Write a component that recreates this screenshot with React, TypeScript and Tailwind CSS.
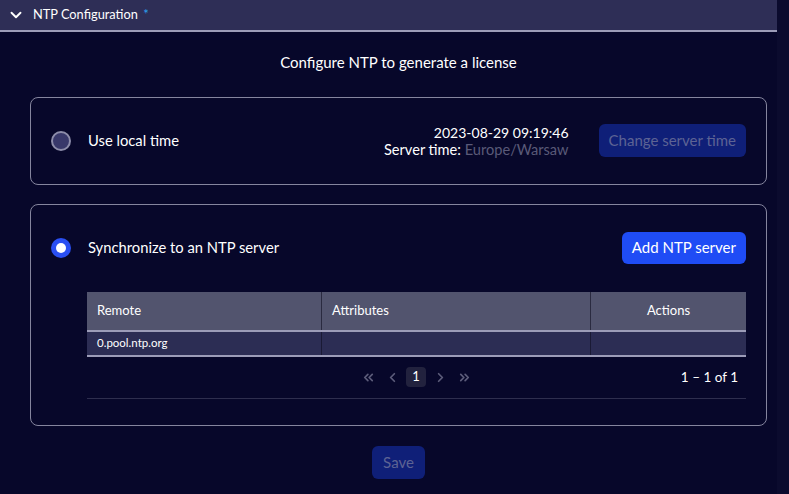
import { ChevronDown, ChevronLeft, ChevronRight, ChevronsLeft, ChevronsRight } from "lucide-react";

function Radio({ checked }: { checked?: boolean }) {
  if (checked) {
    return (
      <span className="flex h-5 w-5 items-center justify-center rounded-full bg-[#2a4ff2]">
        <span className="h-[10px] w-[10px] rounded-full bg-white" />
      </span>
    );
  }
  return <span className="h-5 w-5 rounded-full border-2 border-[#8d8daa] bg-[#38386a]" />;
}

export default function App() {
  return (
    <div className="flex h-[494px] w-[789px] bg-[#07072a] font-['Lato',sans-serif] text-white">
      <div className="flex w-[777px] flex-col">
        <div className="flex h-[32px] items-center gap-[8px] border-b-2 border-[#9c9cb8] bg-[#2e2e56] pl-[7px]">
          <ChevronDown size={18} strokeWidth={2.5} className="text-white" />
          <span className="text-[12.8px]">
            NTP Configuration <span className="ml-[2px] text-[#2ba5f0]">*</span>
          </span>
        </div>

        <div className="ml-[30px] mr-[10px] flex flex-col">
          <h1 className="mt-[19px] text-center text-[15px]">Configure NTP to generate a license</h1>

          <div className="mt-[23px] flex h-[88px] items-center rounded-lg border border-[#85859e] px-[20px]">
            <Radio />
            <span className="ml-[17px] text-[14.75px]">Use local time</span>
            <div className="ml-auto flex flex-col items-end leading-[17px]">
              <span className="text-[14px]">2023-08-29 09:19:46</span>
              <span className="text-[14.6px]">
                Server time: <span className="text-[#5a5a78]">Europe/Warsaw</span>
              </span>
            </div>
            <button className="ml-[30px] h-[33px] rounded-md bg-[#0f1f78] px-[10px] text-[15px] text-[#5d6394]">
              Change server time
            </button>
          </div>

          <div className="mt-[19px] flex flex-col rounded-lg border border-[#85859e] px-[20px] pb-[26px] pt-[27px]">
            <div className="flex items-center">
              <Radio checked />
              <span className="ml-[17px] text-[14.75px]">Synchronize to an NTP server</span>
              <button className="ml-auto h-[32px] rounded-md bg-[#1f4cf5] px-[10px] text-[15px]">Add NTP server</button>
            </div>

            <div className="ml-[36px] mt-[28px]">
              <div className="grid grid-cols-[235px_269px_1fr] border-b-2 border-[#9c9cb8] bg-[#52546e] text-[13px]">
                <div className="flex h-[38px] items-center border-r border-[#2a2a40] pl-[10px]">Remote</div>
                <div className="flex h-[38px] items-center border-r border-[#2a2a40] pl-[10px]">Attributes</div>
                <div className="flex h-[38px] items-center justify-center">Actions</div>
              </div>
              <div className="grid grid-cols-[235px_269px_1fr] border-b-2 border-[#9c9cb8] bg-[#2c2d54] text-[11.5px]">
                <div className="flex h-[23px] items-center border-r border-[#1a1a35] pl-[10px]">0.pool.ntp.org</div>
                <div className="border-r border-[#1a1a35]" />
                <div />
              </div>
              <div className="flex h-[42px] items-center border-b border-[#2e2e4e]">
                <div className="ml-[274px] flex items-center text-[#5c5c7a]">
                  <ChevronsLeft size={15} strokeWidth={2.75} />
                  <ChevronLeft size={15} strokeWidth={2.75} className="ml-[9px]" />
                  <span className="ml-[6px] flex h-[20px] w-[20px] items-center justify-center rounded bg-[#22223e] text-[13px] text-white">
                    1
                  </span>
                  <ChevronRight size={15} strokeWidth={2.75} className="ml-[7px]" />
                  <ChevronsRight size={15} strokeWidth={2.75} className="ml-[9px]" />
                </div>
                <span className="ml-auto mr-[8px] text-[13.5px]">1 – 1 of 1</span>
              </div>
            </div>
          </div>

          <div className="mt-[20px] flex justify-center">
            <button className="h-[33px] rounded-md bg-[#0f1f78] px-[11px] text-[15px] text-[#5d6394]">Save</button>
          </div>
        </div>
      </div>
      <div className="flex-1 bg-[#0b0b2e]" />
    </div>
  );
}
